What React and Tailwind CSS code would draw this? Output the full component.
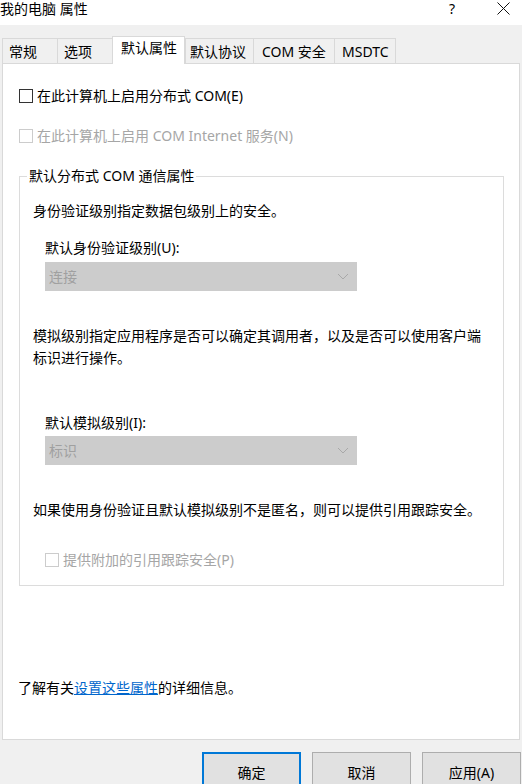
import React from "react";

const FONT = { fontFamily: '"Noto Sans", "Noto Sans CJK SC", sans-serif' };

function Check({ disabled, label }) {
  return (
    <div className="flex items-center h-[20px]">
      <div
        className={
          "w-[14px] h-[14px] border bg-white shrink-0 " +
          (disabled ? "border-[#cccccc]" : "border-[#333333]")
        }
      />
      <span
        className={
          "ml-[4px] leading-[20px] whitespace-nowrap " +
          (disabled ? "text-[#a6a6a6]" : "text-black")
        }
      >
        {label}
      </span>
    </div>
  );
}

function Select({ value }) {
  return (
    <div className="w-[312px] h-[29px] bg-[#cccccc] flex items-center justify-between pl-[4px] pr-[8px]">
      <span className="text-[#a0a0a0] leading-[20px]">{value}</span>
      <svg width="12" height="7" viewBox="0 0 12 7">
        <path d="M1 1 L6 6 L11 1" fill="none" stroke="#a8a8a8" strokeWidth="1" />
      </svg>
    </div>
  );
}

function Tab({ label, w, pl, active, last }) {
  if (active) {
    return (
      <div
        className="h-[28px] -mb-[1px] relative z-10 bg-white border-t border-l border-r border-[#d9d9d9] pt-[1px] leading-[20px] whitespace-nowrap"
        style={{ width: w, paddingLeft: pl }}
      >
        {label}
      </div>
    );
  }
  return (
    <div
      className={
        "h-[25px] bg-[#f0f0f0] border-t border-l border-[#d9d9d9] pt-[3px] leading-[20px] whitespace-nowrap " +
        (last ? "border-r" : "")
      }
      style={{ width: w, paddingLeft: pl }}
    >
      {label}
    </div>
  );
}

export default function App() {
  return (
    <div
      className="w-[522px] h-[784px] overflow-hidden bg-[#f0f0f0] text-[14px] text-black"
      style={FONT}
    >
      {/* title bar */}
      <div className="h-[25px] bg-white flex items-start justify-between">
        <span className="text-[14px] leading-[18px] whitespace-nowrap">我的电脑 属性</span>
        <div className="flex items-start">
          <span className="text-[14px] leading-[18px]">?</span>
          <svg className="ml-[42px] mr-[12px] mt-[2px]" width="13" height="13" viewBox="0 0 13 13">
            <path d="M0.5 0.5 L12.5 12.5 M12.5 0.5 L0.5 12.5" stroke="#111" strokeWidth="1" />
          </svg>
        </div>
      </div>

      {/* tabs */}
      <div className="mt-[11px] flex items-end pl-[2px]">
        <Tab label="常规" w={55} pl={6} />
        <Tab label="选项" w={55} pl={6} />
        <Tab label="默认属性" w={73} pl={8} active />
        <Tab label="默认协议" w={68} pl={4} />
        <Tab label="COM 安全" w={81} pl={8} />
        <Tab label="MSDTC" w={62} pl={7} last />
      </div>

      {/* panel */}
      <div className="ml-[2px] w-[518px] h-[677px] bg-white border border-[#d9d9d9] pl-[15px] flex flex-col">
        <div className="mt-[22px] ml-[1px]">
          <Check label="在此计算机上启用分布式 COM(E)" />
        </div>
        <div className="mt-[20px] ml-[1px]">
          <Check disabled label="在此计算机上启用 COM Internet 服务(N)" />
        </div>

        {/* group box */}
        <div className="mt-[30px] ml-[1px] w-[485px] border border-[#dcdcdc] pb-[15px] flex flex-col">
          <div className="-mt-[11px] ml-[7px] px-[2px] bg-white w-fit leading-[20px] whitespace-nowrap">
            默认分布式 COM 通信属性
          </div>
          <div className="pl-[13px] flex flex-col">
            <div className="mt-[15px] leading-[20px] whitespace-nowrap">
              身份验证级别指定数据包级别上的安全。
            </div>
            <div className="pl-[12px] mt-[17px] leading-[20px]">默认身份验证级别(U):</div>
            <div className="pl-[12px] mt-[4px]">
              <Select value="连接" />
            </div>
            <div className="mt-[34px] leading-[22px] whitespace-nowrap">
              模拟级别指定应用程序是否可以确定其调用者，以及是否可以使用客户端
              <br />
              标识进行操作。
            </div>
            <div className="pl-[12px] mt-[44px] leading-[20px]">默认模拟级别(I):</div>
            <div className="pl-[12px] mt-[3px]">
              <Select value="标识" />
            </div>
            <div className="mt-[35px] leading-[20px] whitespace-nowrap">
              如果使用身份验证且默认模拟级别不是匿名，则可以提供引用跟踪安全。
            </div>
            <div className="pl-[12px] mt-[30px]">
              <Check disabled label="提供附加的引用跟踪安全(P)" />
            </div>
          </div>
        </div>

        <div className="mt-[92px] leading-[20px] whitespace-nowrap">
          了解有关<span className="text-[#0066cc] underline">设置这些属性</span>的详细信息。
        </div>
      </div>

      {/* buttons */}
      <div className="mt-[12px] flex justify-end gap-[11px] pr-[1px]">
        <div className="w-[99px] h-[40px] bg-[#e1e1e1] border-2 border-[#0078d7] flex items-center justify-center">
          确定
        </div>
        <div className="w-[99px] h-[40px] bg-[#e1e1e1] border border-[#adadad] flex items-center justify-center">
          取消
        </div>
        <div className="w-[99px] h-[40px] bg-[#e1e1e1] border border-[#adadad] flex items-center justify-center">
          应用(A)
        </div>
      </div>
    </div>
  );
}
